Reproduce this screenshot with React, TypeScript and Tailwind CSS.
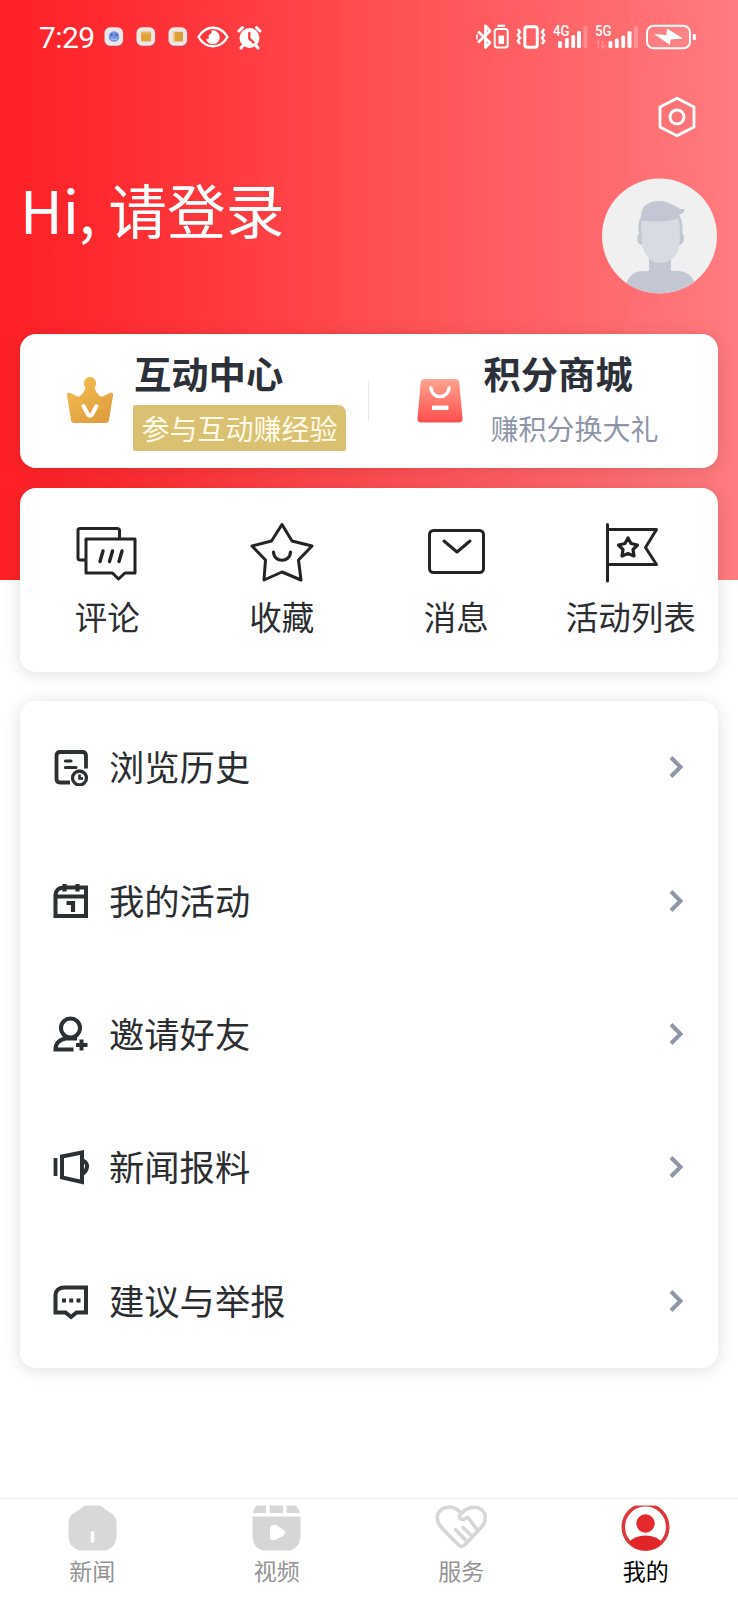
import type { ReactNode } from "react";

const cjk = "font-['Noto_Sans_CJK_SC',sans-serif]";
const cardShadow = "shadow-[0_2px_18px_rgba(0,0,0,0.13)]";

function AppBadge({ children }: { children: ReactNode }) {
  return (
    <svg width="20" height="20" viewBox="0 0 20 20">
      <rect x="0.5" y="0.8" width="19" height="19" rx="5.5" fill="#8f5a66" opacity="0.5" />
      <rect x="0.5" y="0.3" width="18.6" height="18.4" rx="5.5" fill="#ece6e6" />
      {children}
    </svg>
  );
}

function StatusBar() {
  return (
    <div className="flex h-[74px] items-center pl-[39px] pr-[41px] text-white">
      <span className="w-[65px] pt-px font-[Roboto,sans-serif] text-[30px] leading-none tracking-[-0.6px]">7:29</span>
      <div className="flex items-center gap-[12px]">
        <AppBadge>
          <circle cx="10" cy="9.5" r="5.3" fill="#6f93e0" />
          <circle cx="7.6" cy="7.8" r="0.9" fill="#2c4a9a" />
          <circle cx="12.4" cy="7.8" r="0.9" fill="#2c4a9a" />
          <path d="M7 11.2Q10 14 13 11.2" stroke="#a9c3f5" strokeWidth="1.2" fill="none" />
        </AppBadge>
        <AppBadge>
          <rect x="5" y="4.8" width="10" height="9.6" fill="#e0a33c" />
          <rect x="5" y="4.8" width="10" height="2.4" fill="#e9b657" />
        </AppBadge>
        <AppBadge>
          <rect x="5" y="4.8" width="10" height="9.6" fill="#dc9f35" />
          <rect x="5" y="4.8" width="2" height="9.6" fill="#efc578" />
        </AppBadge>
      </div>
      <svg className="ml-[9px]" width="32" height="22" viewBox="0 0 32 22" fill="none">
        <path d="M1.5 11C5 5 10 1.7 16 1.7S27 5 30.5 11C27 17 22 20.3 16 20.3S5 17 1.5 11Z" stroke="#fff" strokeWidth="2.4" />
        <path d="M14.500 4.500A6.900 6.900 0 1 1 9 12.500Q10.500 14 12 12Q10.500 9 14 7.500Q15 6.500 14.500 4.500Z" fill="#fff" />
      </svg>
      <svg className="ml-[8px]" width="26" height="25" viewBox="0 0 26 25" fill="none">
        <circle cx="12.5" cy="13" r="10" fill="#fff" />
        <path d="M2 6L5.500 2.500M23 6L19.500 2.500M5.500 21L4 23M19.500 21L21 23" stroke="#fff" strokeWidth="3" strokeLinecap="round" />
        <path d="M12.300 8V13.600L16.500 17.500" stroke="#ff3c40" strokeWidth="2.400" strokeLinecap="round" />
      </svg>
      <div className="ml-auto flex items-center">
        <svg width="34" height="26" viewBox="0 0 34 26" fill="none" stroke="#fff">
          <path d="M2 7.5L14 18.5L9.5 23.5V2L14 7L2 18.5" strokeWidth="2.8" strokeLinejoin="round" />
          <path d="M1 10.500V15.500" strokeWidth="1.600" />
          <rect x="18.700" y="5" width="13" height="18.600" rx="2.500" strokeWidth="2" />
          <path d="M21.500 1.800H29" strokeWidth="2.200" />
          <rect x="22.500" y="11.500" width="5.500" height="8.500" fill="#fff" stroke="none" />
        </svg>
        <svg className="ml-[6px]" width="30" height="26" viewBox="0 0 30 26" fill="none" stroke="#fff">
          <rect x="8.800" y="2.700" width="12.500" height="20.500" rx="2.500" strokeWidth="3" />
          <path d="M1.800 5L4 8L1.800 11L4 14L1.800 17L4 20M28.200 5L26 8L28.200 11L26 14L28.200 17L26 20" strokeWidth="2.300" />
        </svg>
        <svg className="ml-[7px]" width="36" height="26" viewBox="0 0 36 26" fill="#fff">
          <text x="0" y="12" fontFamily="Roboto, sans-serif" fontSize="14.500" fontWeight="500" textLength="16.500" lengthAdjust="spacingAndGlyphs">4G</text>
          <rect x="5" y="17" width="4" height="7" rx="1.500" />
          <rect x="12" y="14" width="3.800" height="10" rx="1.500" />
          <rect x="18.300" y="11" width="3.800" height="13" rx="1.500" />
          <rect x="24" y="7" width="4" height="17" rx="1.500" />
          <rect x="30.500" y="2" width="4" height="22" rx="1.500" opacity="0.25" />
        </svg>
        <svg className="ml-[6px]" width="46" height="26" viewBox="0 0 46 26" fill="#fff">
          <text x="0" y="12" fontFamily="Roboto, sans-serif" fontSize="14.500" fontWeight="500" textLength="16.500" lengthAdjust="spacingAndGlyphs">5G</text>
          <path d="M3.500 24V17L1.500 19.500M7.500 17V24L10.500 21" stroke="#fff" strokeWidth="1.400" fill="none" opacity="0.25" />
          <rect x="13.500" y="17" width="3.800" height="7" rx="1.500" />
          <rect x="20" y="14.500" width="3.800" height="9.500" rx="1.500" />
          <rect x="26.300" y="11.500" width="3.800" height="12.500" rx="1.500" />
          <rect x="32.500" y="7" width="4" height="17" rx="1.500" />
          <rect x="39" y="2" width="4" height="22" rx="1.500" opacity="0.25" />
        </svg>
        <svg className="ml-[4px]" width="52" height="26" viewBox="0 0 52 26" fill="none">
          <rect x="2" y="1.800" width="43" height="22.500" rx="6.500" stroke="#fff" strokeWidth="2" fill="#fff" fillOpacity="0.1" />
          <path d="M9 10L21.500 11L22 4.500L38 14.500L25.500 15.500L25 21Z" fill="#fff" />
          <path d="M49.300 10V16" stroke="#fff" strokeWidth="3" />
        </svg>
      </div>
    </div>
  );
}

function SettingsIcon() {
  return (
    <svg width="40" height="42" viewBox="0 0 40 42" fill="none" stroke="#fff" strokeWidth="2.800" strokeLinejoin="round">
      <path d="M20 2.200L37 11V31L20 39.800L3 31V11Z" />
      <circle cx="20" cy="21" r="7" strokeWidth="3" />
    </svg>
  );
}

function Avatar() {
  return (
    <svg width="116" height="116" viewBox="0 0 116 116">
      <defs>
        <clipPath id="avatar-clip">
          <circle cx="58.500" cy="58" r="57.500" />
        </clipPath>
      </defs>
      <g clipPath="url(#avatar-clip)">
        <rect width="116" height="116" fill="#f0f0f0" />
        <path d="M25 106C28 97 34 93 43 93H76C85 93 91 97 94 106V120H25Z" fill="#c3c7d3" />
        <rect x="48" y="80" width="22" height="20" fill="#c3c7d3" />
        <path d="M38 56C37 48 37 44 40 39C40 28 47 23 58 23C67 23 74 28 79.500 31Q82 31.500 83.500 30.500C84 34 81 36 78 37C81.500 42 82 49 81.500 56C84.500 58 83 67 78.500 67H40.500C35.500 66 35 58 38 56Z" fill="#c3c7d3" />
        <path d="M40.500 42.500C51 44.500 66 44 77 40.500C79.500 47 79 56 78.500 66C77.500 78 69 85 59.500 85C50 85 42.500 77 41 66C40.500 58 40 50 40.500 42.500Z" fill="#d8dbe2" />
      </g>
    </svg>
  );
}

function CrownIcon() {
  return (
    <svg width="48" height="48" viewBox="0 0 48 48">
      <defs>
        <linearGradient id="crown" x1="0" y1="0" x2="0.700" y2="1">
          <stop offset="0" stopColor="#f3c153" />
          <stop offset="1" stopColor="#e09d3d" />
        </linearGradient>
      </defs>
      <path d="M24 1A6.300 6.300 0 0 1 28.500 11.500Q30 17 34 20Q35.500 21 37.500 20L44.500 16.700Q47.500 16 47 19.500L43 44Q42.700 47 39.500 47H8Q5.500 47 5 44L1 19.500Q.500 16 3.500 16.700L10.500 20Q12.500 21 14 20Q18 17 19.500 11.500A6.300 6.300 0 0 1 24 1Z" fill="url(#crown)" />
      <path d="M17.500 30L22 38.500Q24 41 26 38.500L30.500 30" fill="none" stroke="#fff" strokeWidth="4" strokeLinecap="round" strokeLinejoin="round" />
    </svg>
  );
}

function BagIcon() {
  return (
    <svg width="46" height="46" viewBox="0 0 46 46">
      <defs>
        <linearGradient id="bag" x1="0" y1="0" x2="0" y2="1">
          <stop offset="0" stopColor="#ffa48f" />
          <stop offset="1" stopColor="#fd4d4d" />
        </linearGradient>
      </defs>
      <path d="M7.500 1H38.500Q42 1 42.300 4.500L45.500 40.500Q45.700 44.500 41.500 44.500H4.500Q.300 44.500 .500 40.500L3.700 4.500Q4 1 7.500 1Z" fill="url(#bag)" />
      <path d="M14 10C14.500 15 18 18.500 23 18.500S31.500 15 32 10" fill="none" stroke="#fff" strokeWidth="3.500" strokeLinecap="round" />
      <rect x="15" y="27.500" width="16.500" height="4.500" rx="1" fill="#fff" />
    </svg>
  );
}

function PromoCard() {
  return (
    <section className={`mx-5 flex h-[134px] items-center rounded-[16px] bg-white ${cardShadow}`}>
      <div className="flex h-full flex-1 pl-[46px]">
        <div className="w-[67px] pt-[42px]"><CrownIcon /></div>
        <div className="pt-[21px]">
          <h2 className="pl-px text-[37.300px] font-bold leading-[37px] text-[#2c3038]">互动中心</h2>
          <div className="mt-[13px] flex h-[46px] w-[213px] items-center justify-center rounded-[2px] rounded-tr-[8px] bg-[#dac171] pb-px text-[28px] leading-none text-[#fffbea]">参与互动赚经验</div>
        </div>
      </div>
      <div className="h-[40px] w-px bg-[#e9e9ea]" />
      <div className="flex h-full flex-1 pl-[48px]">
        <div className="w-[66px] pt-[44px]"><BagIcon /></div>
        <div className="pt-[21px]">
          <h2 className="pl-px text-[37.300px] font-bold leading-[37px] text-[#2c3038]">积分商城</h2>
          <div className="mt-[13px] flex h-[46px] items-center pb-px pl-[8px] text-[28px] leading-none text-[#8d96a8]">赚积分换大礼</div>
        </div>
      </div>
    </section>
  );
}

function ShortcutIcon({ children }: { children: ReactNode }) {
  return (
    <svg width="64" height="64" viewBox="0 0 64 64" fill="none" stroke="#222425" strokeWidth="3" strokeLinecap="round" strokeLinejoin="round">
      {children}
    </svg>
  );
}

const shortcuts = [
  {
    label: "评论",
    icon: (
      <>
        <path d="M10 33H5.500Q3 33 3 31V3Q3 1.500 5.500 1.500H42Q44.500 1.500 44.500 3.500V10" />
        <path d="M11 12H60V46H50L43.500 52L37.500 46H11Z" />
        <path d="M28 24L25 34.500M37.500 24L34.500 34.500M47 24L44 34.500" strokeWidth="3.400" />
      </>
    ),
  },
  {
    label: "收藏",
    icon: (
      <>
        <path d="M32 -2.500L42 14L62 19L48.500 33L51 53L32 45L14 53L15.500 33L2 19L21.500 14Z" />
        <path d="M23.500 25C24 36 40 36 40.500 25" strokeWidth="3.200" />
      </>
    ),
  },
  {
    label: "消息",
    icon: (
      <>
        <rect x="5.500" y="3.500" width="54" height="42" rx="4" />
        <path d="M20 14L33 25L46 14" />
      </>
    ),
  },
  {
    label: "活动列表",
    icon: (
      <>
        <path d="M8.500-2.500V54" />
        <path d="M8.500 2.500H57.500L46.500 20.500L57.500 37.500H8.500" />
        <path d="M29 11L32 16.500L38.500 18L34 22.500L35 29L29 26.500L23 29L24 22.500L19.500 18L26 16.500Z" strokeWidth="3.200" />
      </>
    ),
  },
];

function Shortcuts() {
  return (
    <section className={`mx-5 mt-5 grid h-[184px] grid-cols-4 rounded-[16px] bg-white ${cardShadow}`}>
      {shortcuts.map((s) => (
        <div key={s.label} className="flex flex-col items-center pt-[39px] [&>svg]:overflow-visible">
          <ShortcutIcon>{s.icon}</ShortcutIcon>
          <span className="mt-[8px] whitespace-nowrap text-[32.500px] leading-[33px] text-[#2b2e30]">{s.label}</span>
        </div>
      ))}
    </section>
  );
}

const menu = [
  {
    label: "浏览历史",
    icon: (
      <>
        <path d="M33 19.500V6.500Q33 3 29.500 3H7Q3.500 3 3.500 6.500V30Q3.500 33.500 7 33.500H17" strokeWidth="3.800" />
        <path d="M12.500 12H18M12.500 18.500H23" strokeLinecap="round" strokeWidth="3.200" />
        <circle cx="26.500" cy="29" r="7" strokeWidth="3.300" />
        <path d="M26.500 25.500V29.500H30" strokeWidth="2.600" />
      </>
    ),
  },
  {
    label: "我的活动",
    icon: (
      <>
        <path d="M2.500 33V12Q3 5 10.500 4.500H33V33Z" strokeWidth="4" />
        <path d="M2 13.500H34M11.500 1V8.500M24.500 1V8.500" strokeWidth="4.200" />
        <path d="M13.500 20H20V29" strokeWidth="4.200" />
      </>
    ),
  },
  {
    label: "邀请好友",
    icon: (
      <>
        <circle cx="17.500" cy="12" r="9.500" strokeWidth="4" />
        <path d="M20.500 33.500H2.500Q2.500 24.500 12.500 22.500H24" strokeWidth="4" />
        <path d="M28.500 23.500V34.500M23 29H34.500" strokeWidth="4" />
      </>
    ),
  },
  {
    label: "新闻报料",
    icon: (
      <>
        <path d="M2.500 9V27" strokeWidth="3.800" />
        <path d="M9 7.500L29 3.500V33L9 28.500Z" strokeWidth="4" />
        <path d="M30 11.500Q34.500 14 34 18T30 24.500" strokeWidth="4" />
      </>
    ),
  },
  {
    label: "建议与举报",
    icon: (
      <>
        <path d="M2.500 29.500V12Q3 5 11 4.500H33V29.500H23.500L18 34L12.500 29.500H2.500Z" strokeWidth="4" />
        <path d="M9 17.500H13M16.200 17.500H20.200M23.500 17.500H27.500" strokeWidth="4" />
      </>
    ),
  },
];

function Menu() {
  return (
    <section className={`mx-5 mt-[29px] flex h-[667px] flex-col rounded-[16px] bg-white ${cardShadow}`}>
      {menu.map((m) => (
        <div key={m.label} className="flex flex-1 items-center pl-[32.500px] pr-[33.500px]">
          <svg width="37" height="37" viewBox="0 0 37 37" fill="none" stroke="#2b3033" strokeWidth="3.400">
            {m.icon}
          </svg>
          <span className="ml-[19.500px] pb-[4px] text-[35.300px] leading-[35px] text-[#2b2e30]">{m.label}</span>
          <svg className="mb-[1px] ml-auto" width="17" height="24" viewBox="0 0 17 24" fill="none" stroke="#8d97a9" strokeWidth="4">
            <path d="M3 2.500L12.500 12L3 21.500" />
          </svg>
        </div>
      ))}
    </section>
  );
}

const tabs = [
  {
    label: "新闻",
    icon: (
      <>
        <path d="M17 .500H32Q35 2 37.500 4.500L45 9.500Q48.500 13 48.500 17V31Q48.500 42 38 45.500H11Q.500 42 .500 31V17Q.500 13 4 9.500L11.500 4.500Q14 2 17 .500Z" fill="#d8d8d8" />
        <rect x="22.700" y="26" width="3.600" height="12" rx="1.800" fill="#fff" />
      </>
    ),
  },
  {
    label: "视频",
    icon: (
      <>
        <path d="M5 .500H14V8H.800Q1.500 3.500 5 .500ZM17.500 .500H31V8H17.500ZM34.500 .500H43.500Q47 3.500 48 8H34.500ZM.500 11.500H48.500V31Q48.500 42 38.500 45.500H10.500Q.500 42 .500 31Z" fill="#d6d6d6" />
        <path d="M21 20Q23 19 25 20.500L31 24.500Q35 27.500 31 31L24 34.500Q18 37 18 32V23Q18 20.500 21 20Z" fill="#fff" />
      </>
    ),
  },
  {
    label: "服务",
    icon: (
      <g fill="none" stroke="#d6d6d6" strokeWidth="3.600" strokeLinecap="round" strokeLinejoin="round">
        <path d="M24.500 41.500Q22.500 41 20.500 39L4 22Q-1.500 15 1 9C4 1.500 14 .500 20 4.500L24.500 8L29 4.500C35 1 44 1.500 47.500 8.500Q50 15 45 21.500L28.500 39Q26.500 41.500 24.500 41.500Z" />
        <path d="M24.500 8L22.500 10.500Q22 14.500 26 14.500L31 12.500L40 24.500M18.500 24.500L28.500 35M26 22.500L34.500 30.500" />
      </g>
    ),
  },
  {
    label: "我的",
    active: true,
    icon: (
      <>
        <defs>
          <clipPath id="me-clip"><rect y=".500" width="49" height="46" /></clipPath>
        </defs>
        <g clipPath="url(#me-clip)">
          <circle cx="24.500" cy="22" r="22.200" fill="#fff" stroke="#dd383c" strokeWidth="3.600" />
          <circle cx="24.500" cy="18.500" r="9.200" fill="#e42a2d" />
          <path d="M8 37Q14 30.500 24.500 30.500T41 37Q34 45 24.500 45T8 37Z" fill="#e02428" />
        </g>
      </>
    ),
  },
];

function TabBar() {
  return (
    <nav className="mt-auto grid h-[102px] grid-cols-4 border-t border-[#f0f0f0] bg-white">
      {tabs.map((t) => (
        <div key={t.label} className="flex flex-col items-center pt-[6px]">
          <svg width="49" height="46" viewBox="0 0 49 46" className="overflow-visible">{t.icon}</svg>
          <span className={`mt-[8px] text-[23px] leading-[23px] ${t.active ? "text-black" : "text-[#949494]"}`}>{t.label}</span>
        </div>
      ))}
    </nav>
  );
}

export default function App() {
  return (
    <main className={`flex h-[1600px] w-[738px] flex-col overflow-hidden bg-white bg-[linear-gradient(90deg,#ff2026_0%,#ff2a30_14%,#ff4d51_50%,#ff686c_80%,#ff7c80_100%)] bg-[length:100%_580px] bg-no-repeat ${cjk}`}>
      <StatusBar />
      <header className="h-[260px] pl-[20px] pr-[20px]">
        <div className="flex h-[104px] justify-end pr-[21px] pt-[22px]"><SettingsIcon /></div>
        <div className="flex justify-between">
          <h1 className="pt-[2px] text-[58.700px] font-normal leading-[58px] text-white">Hi, 请登录</h1>
          <div className="-mr-px pr-[2px]"><Avatar /></div>
        </div>
      </header>
      <PromoCard />
      <Shortcuts />
      <Menu />
      <TabBar />
    </main>
  );
}
